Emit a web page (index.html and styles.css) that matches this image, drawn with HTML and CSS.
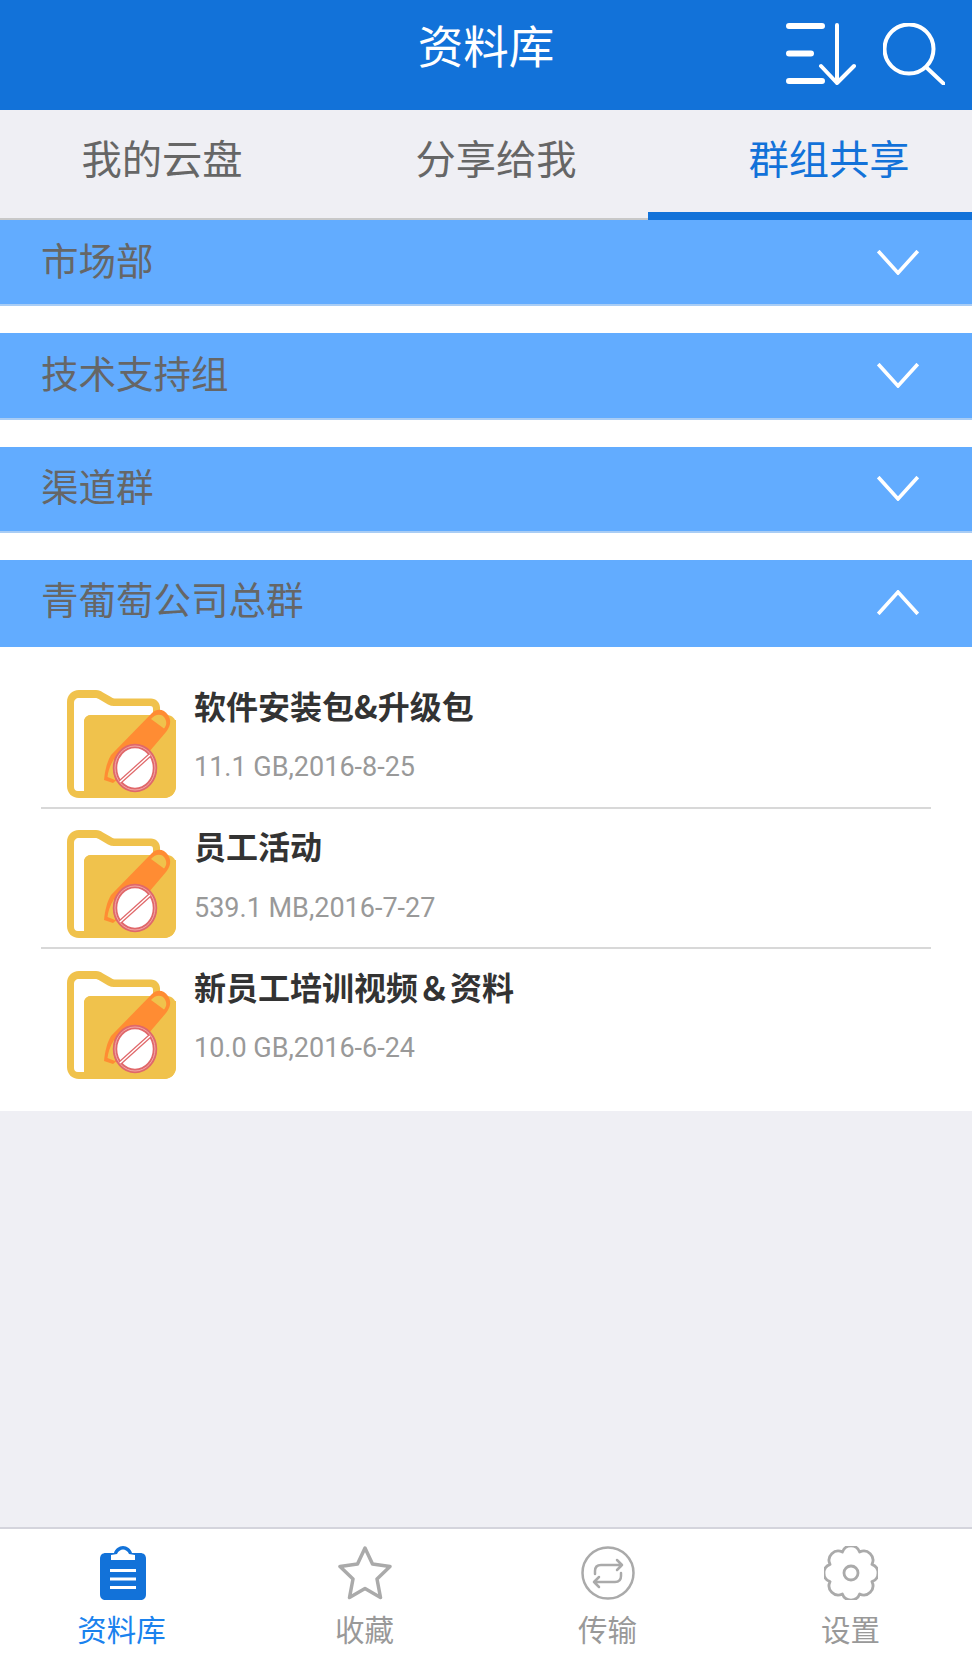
FILE: index.html
```html
<!DOCTYPE html>
<html lang="zh-CN">
<head>
    <meta charset="UTF-8">
    <meta name="viewport" content="width=device-width, initial-scale=1.0">
    <title>资料库</title>
    <link rel="stylesheet" href="styles.css">
</head>
<body>
    <svg class="defs" width="0" height="0">
        <symbol id="folder" viewBox="0 0 109 108">
            <path fill="#f0c24c" d="M12 0H29c3 0 5 1 7 2.500L44 7c1.500 1 3 1.500 5 1.500H84c5 0 9 4 9 9V30H109V96c0 7-5 12-12 12H12C5 108 0 103 0 96V12C0 5 5 0 12 0Z"/>
            <path fill="#fff" d="M12 8H28c2 0 3 .5 5 1.700L41 14.500c2 1 4 1.500 6 1.500H83c2.500 0 3 1 3 3V25H24c-4 0-7 3-7 7V101H11c-3 0-4-2-4-4V13C7 10 9 8 12 8Z"/>
            <path fill="#f0c24c" d="M24 25H100c5 0 9 4 9 9V96c0 7-5 12-12 12H17V32c0-4 3-7 7-7Z"/>
            <path fill="#ff8c33" d="M44 65 85 23C90 18 97 19 101 25 105 31 103 37 99 42L82 62 46 93 37 90C38 80 40 72 44 65Z"/>
            <path fill="#f0c24c" d="M84 29C88 24 94 23.500 97 27 100 31 100 35 97 38.500ZM47 69C43 75 41 82 40.500 87L48 90Z"/>
            <ellipse cx="68" cy="78" rx="20" ry="22" fill="#fff" stroke="#e0686a" stroke-width="4.500"/>
            <ellipse cx="68" cy="78" rx="20" ry="22" fill="none" stroke="#f3a9a9" stroke-width="1"/>
            <path d="M53 92 83 65" stroke="#e0686a" stroke-width="4"/>
            <path d="M53 92 83 65" stroke="#fff" stroke-width="1.500"/>
        </symbol>
        <symbol id="chevron" viewBox="1 1 40 24">
            <path d="M2 2 21 23 40 2" fill="none" stroke="#fff" stroke-width="3.500"/>
        </symbol>
    </svg>

    <header class="topbar">
        <span></span>
        <h1 class="topbar-title">资料库</h1>
        <div class="topbar-actions">
            <svg class="icon-sort" viewBox="0 0 70 62" fill="none" stroke="#fff" stroke-linecap="round" stroke-linejoin="round">
                <path d="M3 3H36M3 30.500H25M3 58H36" stroke-width="6"/>
                <path d="M51 2V60M35 43 51 60 68 43" stroke-width="4"/>
            </svg>
            <svg class="icon-search" viewBox="0 0 62 62" fill="none" stroke="#fff" stroke-linecap="round">
                <circle cx="26" cy="26" r="24.500" stroke-width="4"/>
                <path d="M44 45 61 61" stroke-width="4"/>
            </svg>
        </div>
    </header>

    <nav class="tabs">
        <a class="tab">我的云盘</a>
        <a class="tab">分享给我</a>
        <a class="tab active">群组共享</a>
    </nav>

    <main class="content">
        <div class="groups">
            <section class="group">
                <div class="group-head">
                    <span>市场部</span>
                    <svg class="chevron"><use href="#chevron"/></svg>
                </div>
            </section>
            <section class="group">
                <div class="group-head">
                    <span>技术支持组</span>
                    <svg class="chevron"><use href="#chevron"/></svg>
                </div>
            </section>
            <section class="group">
                <div class="group-head">
                    <span>渠道群</span>
                    <svg class="chevron"><use href="#chevron"/></svg>
                </div>
            </section>
            <section class="group open">
                <div class="group-head">
                    <span>青葡萄公司总群</span>
                    <svg class="chevron up"><use href="#chevron"/></svg>
                </div>
                <ul class="files">
                    <li class="file">
                        <svg class="folder"><use href="#folder"/></svg>
                        <div>
                            <p class="file-name">软件安装包&amp;升级包</p>
                            <p class="file-meta">11.1 GB,2016-8-25</p>
                        </div>
                    </li>
                    <li class="file">
                        <svg class="folder"><use href="#folder"/></svg>
                        <div>
                            <p class="file-name">员工活动</p>
                            <p class="file-meta">539.1 MB,2016-7-27</p>
                        </div>
                    </li>
                    <li class="file">
                        <svg class="folder"><use href="#folder"/></svg>
                        <div>
                            <p class="file-name">新员工培训视频＆资料</p>
                            <p class="file-meta">10.0 GB,2016-6-24</p>
                        </div>
                    </li>
                </ul>
            </section>
        </div>
    </main>

    <footer class="tabbar">
        <a class="tabbar-item active">
            <svg class="tabbar-icon" viewBox="-1 0 54 54">
                <path fill="#1272d9" d="M10 7H18C19 3 23 0 27 0S35 3 36 7H44C48 7 50 9 50 13V48C50 52 48 54 44 54H10C6 54 4 52 4 48V13C4 9 6 7 10 7Z"/>
                <path fill="#fff" d="M15 14V9L21 8C22 5 25 3.500 27 3.500S32 5 33 8L39 9V14ZM14 23H40V26H14ZM14 31.500H40V34.500H14ZM14 40H40V43H14Z"/>
            </svg>
            <span>资料库</span>
        </a>
        <a class="tabbar-item">
            <svg class="tabbar-icon" viewBox="0 0 54 54" fill="none" stroke="#aaa" stroke-width="3.500" stroke-linejoin="round">
                <path d="M27 2 34.500 18 52 20.500 39 33 42.500 51.500 27 42.500 11.500 51.500 15 33 2 20.500 19.500 18Z"/>
            </svg>
            <span>收藏</span>
        </a>
        <a class="tabbar-item">
            <svg class="tabbar-icon" viewBox="0 0 54 54" fill="none" stroke="#aaa" stroke-width="2.500" stroke-linecap="round" stroke-linejoin="round">
                <circle cx="27" cy="27" r="25.500"/>
                <path d="M41 19H20C16 19 14 21 14 25V28M36 14 41 19 36 24M13 36H34C38 36 40 34 40 30V27M18 31 13 36 18 41"/>
            </svg>
            <span>传输</span>
        </a>
        <a class="tabbar-item">
            <svg class="tabbar-icon" viewBox="3 3 50 50" fill="none" stroke="#aaa" stroke-width="2.600" stroke-linejoin="round">
                <path d="M36 8.600A8.500 8.500 0 0 1 47.400 20 8.500 8.500 0 0 1 47.400 36 8.500 8.500 0 0 1 36 47.400 8.500 8.500 0 0 1 20 47.400 8.500 8.500 0 0 1 8.600 36 8.500 8.500 0 0 1 8.600 20 8.500 8.500 0 0 1 20 8.600 8.500 8.500 0 0 1 36 8.600Z"/>
                <circle cx="28" cy="28" r="6.500"/>
            </svg>
            <span>设置</span>
        </a>
    </footer>
</body>
</html>
```

FILE: styles.css
```css
* {
    box-sizing: border-box;
}

html, body {
    height: 100%;
}

body {
    margin: 0;
    display: flex;
    flex-direction: column;
    font-family: "Noto Sans CJK SC", "Noto Sans", sans-serif;
    background-color: #efeff4;
    color: #333;
}

.defs {
    position: absolute;
}

.topbar {
    display: grid;
    grid-template-columns: 1fr auto 1fr;
    height: 110px;
    padding: 0 27px;
    background-color: #1272d9;
    color: #fff;
}

.topbar-title {
    margin: 0;
    font-size: 45.500px;
    font-weight: 400;
    line-height: 88px;
}

.topbar-actions {
    display: flex;
    justify-content: flex-end;
    align-items: flex-start;
    gap: 27px;
    padding-top: 23px;
}

.icon-sort {
    width: 70px;
    height: 62px;
}

.icon-search {
    width: 62px;
    height: 62px;
}

.tabs {
    display: grid;
    grid-template-columns: repeat(3, 1fr);
    height: 110px;
    border-bottom: 2px solid #c8c8c8;
}

.tab {
    height: 110px;
    font-size: 40.300px;
    line-height: 94px;
    text-align: center;
    color: #666;
}

.tab:nth-child(2) {
    padding-left: 20px;
}

.tab:nth-child(3) {
    padding-left: 38px;
}

.tab.active {
    color: #1272d9;
    border-bottom: 8px solid #1272d9;
}

.content {
    flex: 1;
}

.groups {
    background-color: #fff;
}

.group + .group {
    margin-top: 27px;
}

.group-head {
    display: flex;
    justify-content: space-between;
    align-items: center;
    height: 86.300px;
    padding: 0 53px 0 41px;
    background-color: #62acff;
    border-bottom: 2px solid #a9cdf5;
    font-size: 37.500px;
    color: #666;
}

.group-head span {
    padding-bottom: 8px;
}

.group.open .group-head {
    height: 87px;
    border-bottom: none;
}

.group.open .group-head span {
    padding-bottom: 11px;
}

.chevron {
    width: 42px;
    height: 25px;
}

.chevron.up {
    margin-bottom: 2px;
    transform: rotate(180deg);
}

.files {
    margin: 0;
    padding: 21.500px 41px 21px;
    list-style: none;
}

.file {
    display: flex;
    gap: 18px;
    height: 140.500px;
    padding: 21.500px 0 0 26px;
    border-bottom: 2px solid #d8d8d8;
}

.file:last-child {
    border-bottom: none;
}

.folder {
    width: 109px;
    height: 108px;
    flex-shrink: 0;
}

.file-name {
    margin: -3px 0 0;
    font-size: 32px;
    font-weight: 700;
    line-height: 36px;
    color: #333;
}

.file-meta {
    margin: 26.500px 0 0;
    font-family: Roboto, sans-serif;
    font-size: 27px;
    line-height: 36px;
    color: #999;
}

.tabbar {
    display: grid;
    grid-template-columns: repeat(4, 1fr);
    height: 137px;
    padding-top: 17px;
    background-color: #fff;
    border-top: 2px solid #d4d4dc;
}

.tabbar-item {
    display: flex;
    flex-direction: column;
    align-items: center;
    font-size: 29.500px;
    line-height: 40px;
    color: #999;
}

.tabbar-item.active {
    color: #1a82ee;
}

.tabbar-icon {
    width: 54px;
    height: 54px;
    margin-bottom: 8px;
}
```
